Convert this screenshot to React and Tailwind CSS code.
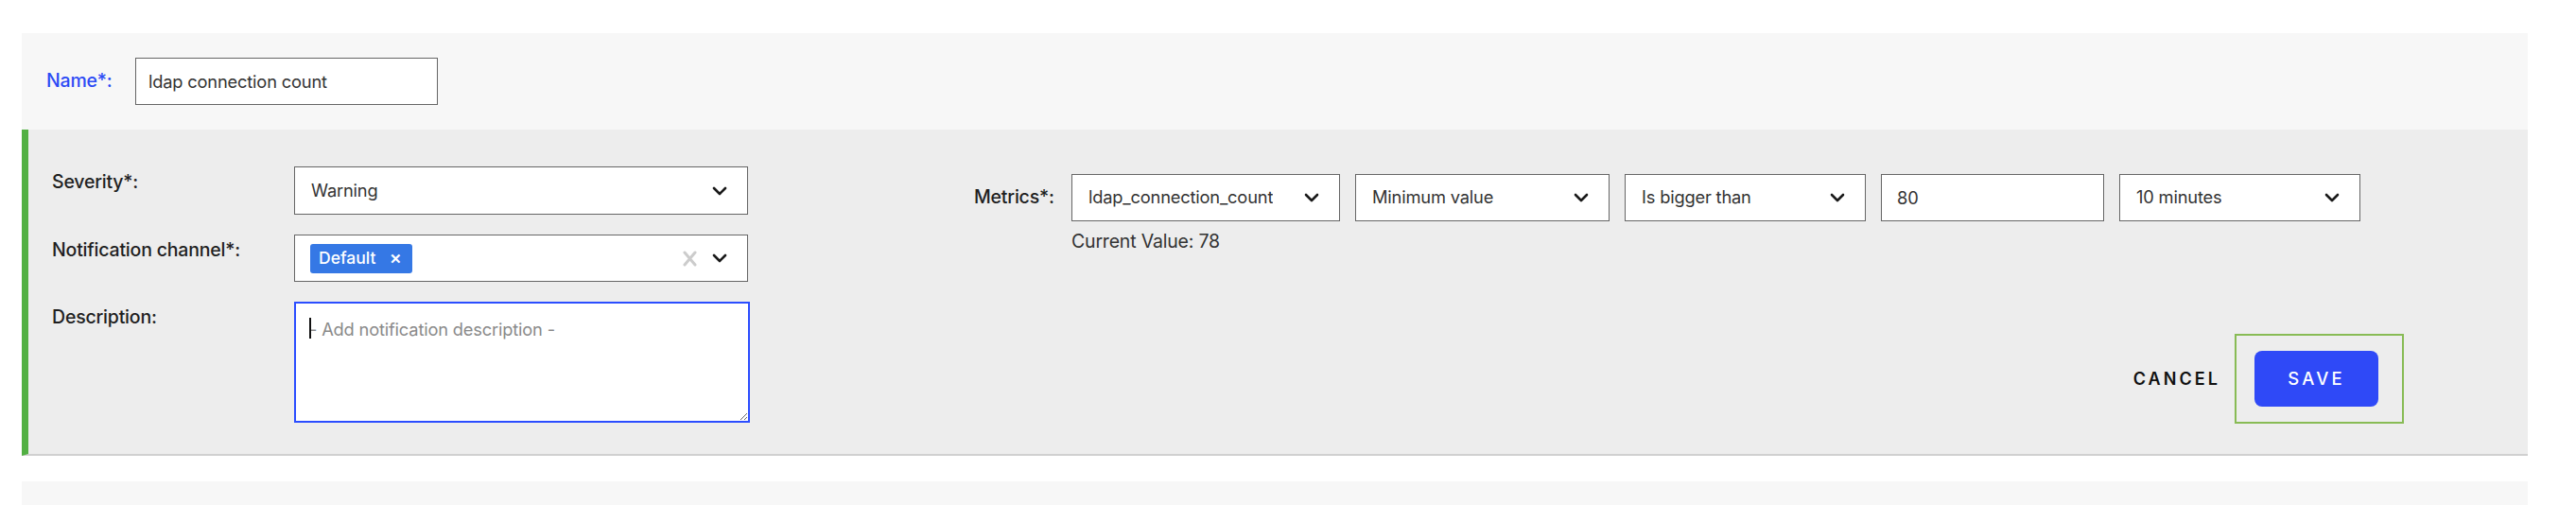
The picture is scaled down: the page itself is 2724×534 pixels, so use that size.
import React from 'react';

function Chevron({ className = '' }) {
  return (
    <svg width="16" height="10" viewBox="0 0 16 10" className={className}>
      <polyline points="2,2 8,8 14,2" fill="none" stroke="#1a1a1a" strokeWidth="2.6" strokeLinecap="round" strokeLinejoin="round" />
    </svg>
  );
}

function SelectBox({ value, width, children }) {
  return (
    <div className={`${width} h-[50px] bg-white border border-[#666] flex items-center justify-between pl-[17px] pr-[21px] text-[18.3px] tracking-[-0.01em] text-[#333]`}>
      <span className="truncate">{value}</span>
      {children}
      <Chevron />
    </div>
  );
}

export default function App() {
  return (
    <div className="w-[2724px] h-[534px] bg-white pt-[35px] pl-[23px] pr-[51px] font-['Inter','Noto_Sans',sans-serif] overflow-hidden">
      <div className="h-[102px] bg-[#f7f7f7] flex items-center pl-[26px]">
        <div className="w-[94px] text-[19.5px] font-medium tracking-[-0.01em] text-[#2d4bf5]">Name*:</div>
        <input
          className="w-[320px] h-[50px] bg-white border border-[#666] px-[13px] text-[18.3px] tracking-[-0.01em] text-[#333] outline-none"
          defaultValue="ldap connection count"
        />
      </div>

      <div className="bg-[#ededed] border-l-[7px] border-l-[#52b043] border-b-2 border-b-[#d0d0d0] flex pt-[39px] pb-[33px] pl-[25px] pr-[131px]">
        <div className="flex flex-col gap-[21px]">
          <div className="flex">
            <div className="w-[256px] leading-[32px] text-[19.5px] font-medium tracking-[-0.01em] text-[#1f1f1f]">Severity*:</div>
            <SelectBox value="Warning" width="w-[480px] h-[51px]" />
          </div>
          <div className="flex">
            <div className="w-[256px] leading-[32px] text-[19.5px] font-medium tracking-[-0.01em] text-[#1f1f1f]">Notification channel*:</div>
            <div className="w-[480px] h-[50px] bg-white border border-[#666] flex items-center pl-[16px] pr-[21px]">
              <span className="h-[31px] w-[108px] rounded-[3px] bg-[#3578e5] text-white text-[17.5px] font-medium flex items-center pl-[9px] gap-[15px]">
                Default
                <span className="text-[15px] font-semibold leading-none">✕</span>
              </span>
              <span className="ml-auto mr-[16px]">
                <svg width="15" height="17" viewBox="0 0 15 17">
                  <path d="M2 2 L13 15 M13 2 L2 15" stroke="#cccccc" strokeWidth="3" strokeLinecap="round" />
                </svg>
              </span>
              <Chevron />
            </div>
          </div>
          <div className="flex">
            <div className="w-[256px] leading-[32px] text-[19.5px] font-medium tracking-[-0.01em] text-[#1f1f1f]">Description:</div>
            <div className="relative">
              <textarea
                autoFocus
                className="block w-[482px] h-[128px] bg-white border-2 border-[#2b4dff] outline-none px-[14px] pt-[14px] text-[18.3px] tracking-[-0.01em] text-[#333] placeholder:text-[#8a8a8a] resize"
                placeholder="- Add notification description -"
              />
              <span className="absolute left-[16px] top-[17px] w-[1.5px] h-[22px] bg-[#111]" />
            </div>
          </div>
        </div>

        <div className="flex-1 flex flex-col ml-[237px] pt-[8px]">
          <div className="flex items-center">
            <div className="w-[103px] text-[19.5px] font-medium tracking-[-0.01em] text-[#1f1f1f]">Metrics*:</div>
            <div className="flex gap-[16px]">
              <SelectBox value="ldap_connection_count" width="w-[284px]" />
              <SelectBox value="Minimum value" width="w-[269px]" />
              <SelectBox value="Is bigger than" width="w-[255px]" />
              <input
                className="w-[236px] h-[50px] bg-white border border-[#666] px-[16px] text-[18.3px] text-[#333] outline-none"
                defaultValue="80"
              />
              <SelectBox value="10 minutes" width="w-[255px]" />
            </div>
          </div>
          <div className="ml-[103px] mt-[7px] text-[19.5px] tracking-[-0.01em] text-[#333]">Current Value: 78</div>

          <div className="mt-auto self-end flex items-center gap-[15px] -mb-[1px]">
            <button className="text-[18px] font-semibold tracking-[0.17em] text-[#111]">CANCEL</button>
            <div className="border-2 border-[#88bb55] pl-[19px] pr-[25px] py-[16px]">
              <button className="w-[131px] h-[59px] rounded-[8px] bg-[#2f49f7] text-white text-[18.5px] font-medium tracking-[0.17em]">SAVE</button>
            </div>
          </div>
        </div>
      </div>

      <div className="mt-[27px] h-[30px] bg-[#f7f7f7]" />
    </div>
  );
}
